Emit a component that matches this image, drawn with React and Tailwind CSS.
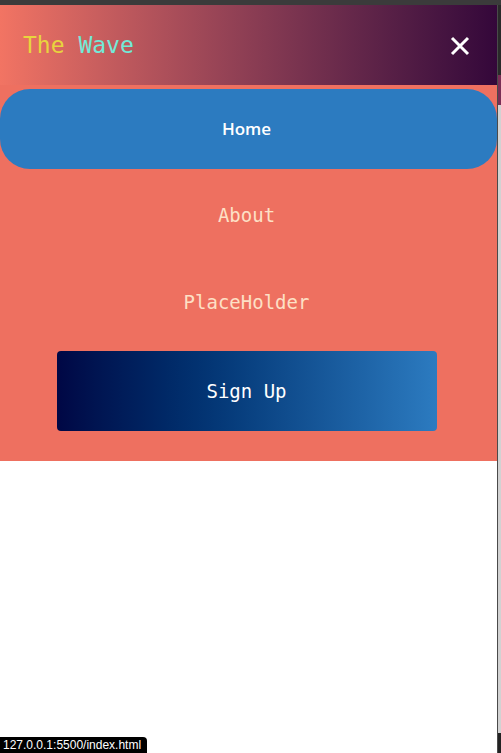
export default function App() {
  const mono = { fontFamily: '"DejaVu Sans Mono", "Liberation Mono", monospace' };
  return (
    <div className="relative w-[501px] h-[753px] overflow-hidden bg-white flex flex-col">
      <div className="h-[5px] bg-[#3b3b3b] shrink-0" />
      <div className="flex flex-1">
        <div className="w-[497px] flex flex-col">
          <header className="h-[80px] flex items-center justify-between pl-[23px] pr-[27px] bg-gradient-to-r from-[#f27463] to-[#34073a]">
            <div className="text-[23px] leading-none" style={mono}>
              <span className="text-[#e8d43e]">The</span>{" "}
              <span className="text-[#72ead8]">Wave</span>
            </div>
            <svg width="20" height="20" viewBox="0 0 20 20" className="mt-[2px]">
              <path d="M2 2 L18 18 M18 2 L2 18" stroke="white" strokeWidth="3" fill="none" />
            </svg>
          </header>
          <nav className="bg-[#ee7060] flex flex-col pt-[4px] pb-[30px]">
            <a
              className="w-full h-[80px] rounded-[30px] bg-[#2c7bc0] flex items-center justify-center pr-[4px] text-white text-[17px] font-semibold"
              style={{ fontFamily: '"Open Sans", "Noto Sans", sans-serif' }}
            >
              Home
            </a>
            <a className="mt-[6px] w-[493px] h-[80px] flex items-center justify-center text-[#fde0c6] text-[19px]" style={mono}>
              About
            </a>
            <a className="mt-[7px] w-[493px] h-[80px] flex items-center justify-center text-[#fde0c6] text-[19px]" style={mono}>
              PlaceHolder
            </a>
            <div className="mt-[9px] w-[493px] flex justify-center">
              <button
                className="w-[380px] h-[80px] rounded-[4px] bg-gradient-to-r from-[#000745] to-[#2c7bc0] flex items-center justify-center text-white text-[19px]"
                style={mono}
              >
                Sign Up
              </button>
            </div>
          </nav>
        </div>
        <div className="w-[4px] flex flex-col border-l border-[#4a4a4a]">
          <div className="h-[70px] bg-[#2a2a2a]" />
          <div className="h-[30px] bg-[#7a2d55]" />
          <div className="flex-1 bg-[#d2d2d2]" />
          <div className="h-[20px] bg-[#222]" />
        </div>
      </div>
      <div
        className="absolute left-0 bottom-0 h-[16px] pl-[3px] pr-[6px] bg-black text-white text-[12px] leading-[16px] rounded-tr-[4px]"
        style={{ fontFamily: '"Liberation Sans", Arial, sans-serif' }}
      >
        127.0.0.1:5500/index.html
      </div>
    </div>
  );
}
